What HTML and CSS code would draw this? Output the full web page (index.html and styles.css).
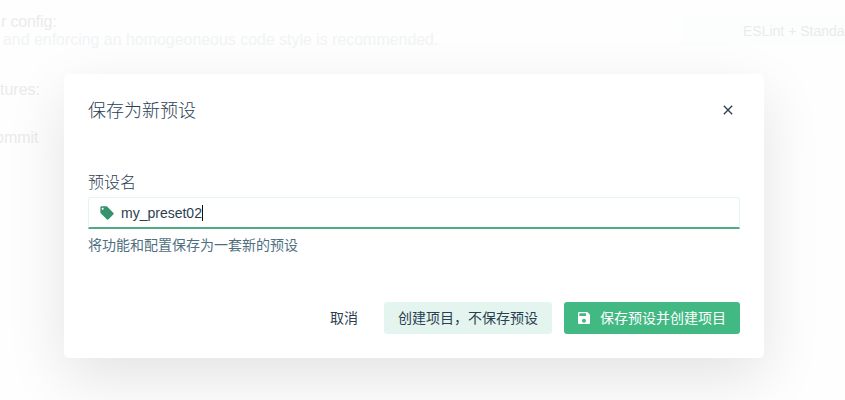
FILE: index.html
```html
<!DOCTYPE html>
<html lang="zh-CN">
<head>
<meta charset="utf-8">
<title>保存为新预设</title>
<link rel="stylesheet" href="styles.css">
</head>
<body>
<main class="page">
  <section class="settings">
    <div class="setting setting-linter">
      <div class="setting-name">r config:</div>
      <div class="setting-description">and enforcing an homogeoneous code style is recommended.</div>
    </div>
    <div class="setting setting-features">tures:</div>
    <div class="setting setting-commit">ommit</div>
  </section>
  <div class="select">ESLint + Standa</div>
</main>
<div class="overlay">
  <div class="modal" role="dialog">
    <header class="modal-header">
      <h1 class="title">保存为新预设</h1>
      <button class="close" aria-label="关闭"><svg viewBox="0 0 24 24"><path d="M19 6.41L17.59 5 12 10.59 6.41 5 5 6.41 10.59 12 5 17.59 6.41 19 12 13.41 17.59 19 19 17.59 13.41 12z"/></svg></button>
    </header>
    <div class="field">
      <div class="field-label">预设名</div>
      <div class="input">
        <svg class="tag" viewBox="0 0 24 24"><path d="M21.41 11.58l-9-9C12.05 2.22 11.55 2 11 2H4c-1.1 0-2 .9-2 2v7c0 .55.22 1.05.59 1.42l9 9c.36.36.86.58 1.41.58.55 0 1.05-.22 1.41-.59l7-7c.37-.36.59-.86.59-1.41 0-.55-.23-1.06-.59-1.42zM5.5 7C4.67 7 4 6.33 4 5.5S4.67 4 5.5 4 7 4.67 7 5.5 6.33 7 5.5 7z"/></svg>
        <span class="value">my_preset02</span><span class="caret"></span>
      </div>
      <div class="field-help">将功能和配置保存为一套新的预设</div>
    </div>
    <footer class="actions">
      <button class="button flat">取消</button>
      <button class="button">创建项目，不保存预设</button>
      <button class="button primary"><svg class="save" viewBox="0 0 24 24"><path d="M17 3H5c-1.11 0-2 .9-2 2v14c0 1.1.89 2 2 2h14c1.1 0 2-.9 2-2V7l-4-4zm-5 16c-1.66 0-3-1.34-3-3s1.34-3 3-3 3 1.34 3 3-1.34 3-3 3zm3-10H5V5h10v4z"/></svg>保存预设并创建项目</button>
    </footer>
  </div>
</div>
</body>
</html>
```
FILE: styles.css
```css
* { box-sizing: border-box; }
body {
  margin: 0;
  width: 845px;
  height: 400px;
  overflow: hidden;
  background: #fefefe;
  color: #2c3e50;
  font-family: "Liberation Sans", "Noto Sans CJK SC", sans-serif;
}
.page {
  display: flex;
  justify-content: space-between;
  height: 400px;
  font-size: 16px;
  line-height: 18px;
  color: #eaebec;
}
.settings { padding-top: 13px; white-space: nowrap; }
.setting-name { padding-left: 1px; letter-spacing: -.15px; }
.setting-description { padding-left: 3px; color: #f1f4f5; letter-spacing: -.04px; }
.setting-features { margin-top: 32px; }
.setting-commit { margin: 30px 0 0 -5px; }
.select {
  width: 163px;
  height: 31px;
  margin-top: 15px;
  padding-left: 61px;
  white-space: nowrap;
  background: #fbfefd;
  font-size: 14px;
  line-height: 32px;
}
.overlay {
  position: absolute;
  inset: 0;
  padding: 74px 81px 42px 64px;
}
.modal {
  display: flex;
  flex-direction: column;
  height: 284px;
  padding: 24px;
  border-radius: 5px;
  background: #fff;
  box-shadow: 0 20px 60px rgba(0, 0, 0, .11);
}
.modal-header {
  display: flex;
  justify-content: space-between;
  height: 72px;
}
.title { margin: 0; font-size: 18px; font-weight: 300; line-height: 26px; }
.close {
  display: flex;
  width: 24px;
  height: 24px;
  padding: 4px;
  border: 0;
  background: none;
}
svg { display: block; fill: currentColor; }
.close svg { width: 16px; height: 16px; fill: #2c3e50; }
.field-label { height: 27px; font-size: 16px; line-height: 25px; font-weight: 300; }
.input {
  display: flex;
  align-items: center;
  height: 32px;
  padding-left: 10px;
  border: 1px solid #e4f5ef;
  border-bottom: 2px solid #53a985;
  border-radius: 3px 3px 0 0;
  font-size: 14px;
}
.tag { width: 16px; height: 16px; margin-right: 6px; color: #36946b; }
.caret { width: 1px; height: 16px; background: #111; }
.field-help { margin-top: 6px; font-size: 14px; line-height: 20px; color: #4f6f7f; }
.actions {
  display: flex;
  justify-content: flex-end;
  gap: 12px;
  margin-top: auto;
}
.button {
  display: flex;
  align-items: center;
  height: 32px;
  padding: 0 14px;
  border: 0;
  border-radius: 3px;
  background: #e3f5ee;
  color: #2c3e50;
  font: inherit;
  font-size: 14px;
  line-height: 32px;
}
.flat { background: none; }
.primary { background: #42b983; color: #fff; padding-left: 12px; }
.save { width: 16px; height: 16px; margin-right: 8px; }
```
